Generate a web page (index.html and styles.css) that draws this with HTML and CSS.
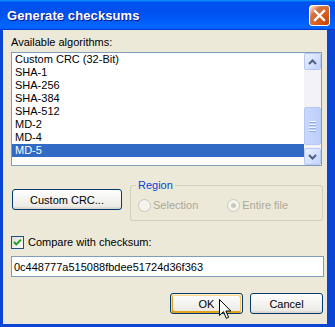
FILE: index.html
```html
<!DOCTYPE html>
<html lang="en">
<head>
    <meta charset="UTF-8">
    <meta name="viewport" content="width=device-width, initial-scale=1.0">
    <title>Generate checksums</title>
    <link rel="stylesheet" href="styles.css">
</head>
<body>
    <div class="window">
        <div class="titlebar">
            <span class="title">Generate checksums</span>
            <button class="close" aria-label="Close">
                <svg width="13" height="13" viewBox="0 0 13 13">
                    <path d="M2 2 L11 11 M11 2 L2 11" stroke="#fff" stroke-width="2.4" stroke-linecap="square"/>
                </svg>
            </button>
        </div>
        <div class="body">
            <div class="label">Available algorithms:</div>
            <div class="listbox">
                <ul class="items">
                    <li>Custom CRC (32-Bit)</li>
                    <li>SHA-1</li>
                    <li>SHA-256</li>
                    <li>SHA-384</li>
                    <li>SHA-512</li>
                    <li>MD-2</li>
                    <li>MD-4</li>
                    <li class="selected">MD-5</li>
                </ul>
                <div class="scrollbar">
                    <div class="sb-btn">
                        <svg width="9" height="6" viewBox="0 0 9 6"><path d="M1 5 L4.5 1.5 L8 5" fill="none" stroke="#4d6185" stroke-width="2"/></svg>
                    </div>
                    <div class="sb-track">
                        <div class="sb-thumb">
                            <span></span><span></span><span></span><span></span>
                        </div>
                    </div>
                    <div class="sb-btn">
                        <svg width="9" height="6" viewBox="0 0 9 6"><path d="M1 1 L4.5 4.5 L8 1" fill="none" stroke="#4d6185" stroke-width="2"/></svg>
                    </div>
                </div>
            </div>

            <div class="options">
                <button class="btn custom">Custom CRC...</button>
                <fieldset class="region">
                    <legend>Region</legend>
                    <div class="radios">
                        <span class="radio-opt"><span class="radio"></span>Selection</span>
                        <span class="radio-opt"><span class="radio checked"></span>Entire file</span>
                    </div>
                </fieldset>
            </div>

            <div class="check">
                <svg width="13" height="13" viewBox="0 0 13 13">
                    <defs>
                        <linearGradient id="cb" x1="0" y1="0" x2="1" y2="1">
                            <stop offset="0" stop-color="#dcdcd7"/>
                            <stop offset="1" stop-color="#ffffff"/>
                        </linearGradient>
                    </defs>
                    <rect x="0.5" y="0.5" width="12" height="12" fill="url(#cb)" stroke="#1c5180"/>
                    <path d="M3 6 L5.3 8.4 L10 3.6" fill="none" stroke="#21a121" stroke-width="2"/>
                </svg>
                <span>Compare with checksum:</span>
            </div>

            <input class="checksum" type="text" value="0c448777a515088fbdee51724d36f363">

            <div class="actions">
                <button class="btn default">OK</button>
                <button class="btn">Cancel</button>
            </div>
        </div>

        <svg class="cursor" width="13" height="21" viewBox="0 0 13 21">
            <path d="M0.5 0.5 L0.5 16.5 L4.5 12.7 L7.3 19.3 L9.6 18.3 L6.9 12 L11.8 12 Z" fill="#fff" stroke="#000" stroke-width="1"/>
        </svg>
    </div>
</body>
</html>
```

FILE: styles.css
```css
body {
    margin: 0;
    padding: 0;
    font-family: "Liberation Sans", Arial, sans-serif;
    font-size: 11px;
    line-height: 13px;
    color: #000;
}
.window {
    position: relative;
    width: 335px;
    height: 327px;
    display: flex;
    flex-direction: column;
    background-color: #0a45d4;
}
.titlebar {
    height: 30px;
    flex-shrink: 0;
    display: flex;
    align-items: center;
    justify-content: space-between;
    padding: 0 5px 0 7px;
    background: linear-gradient(180deg, #0997ff, #0053ee 8%, #0050ee 40%, #0066ff 88%, #0066ff 93%, #005bff 95%, #003dd7 96%, #003dd7);
}
.title {
    color: #fff;
    font-weight: bold;
    font-size: 13px;
    letter-spacing: 0.1px;
    text-shadow: 1px 1px #0f1089;
}
.close {
    width: 21px;
    height: 21px;
    padding: 0;
    margin-top: 1px;
    border: 1px solid #fff;
    border-radius: 3px;
    display: flex;
    align-items: center;
    justify-content: center;
    background: radial-gradient(circle at 90% 90%, #cc4600 0, #dc6527 55%, #cd7546 70%, #ffccb2 90%, #fff 100%);
}
.body {
    flex-grow: 1;
    margin: 0 8px 3px 3px;
    padding: 6px 3px 0 8px;
    background-color: #ece9d8;
    display: flex;
    flex-direction: column;
}
.label {
    height: 13px;
}
.listbox {
    margin-top: 3px;
    width: 311px;
    height: 114px;
    box-sizing: border-box;
    border: 1px solid #7f9db9;
    background-color: #fff;
    display: flex;
}
.items {
    list-style-type: none;
    margin: 0;
    padding: 0;
    flex-grow: 1;
    overflow: hidden;
}
.items li {
    height: 13px;
    padding-left: 3px;
}
.items li.selected {
    background-color: #316ac5;
    color: #fff;
}
.scrollbar {
    width: 17px;
    display: flex;
    flex-direction: column;
    background-color: #f3f2f6;
}
.sb-btn {
    height: 17px;
    box-sizing: border-box;
    border: 1px solid #b6c8f4;
    border-radius: 2px;
    background: linear-gradient(135deg, #eaf0fe, #c2d3fc);
    display: flex;
    align-items: center;
    justify-content: center;
}
.sb-track {
    flex-grow: 1;
    display: flex;
    flex-direction: column;
    justify-content: flex-end;
    padding-bottom: 3px;
}
.sb-thumb {
    height: 38px;
    box-sizing: border-box;
    border: 1px solid #b6c8f4;
    border-radius: 2px;
    background: linear-gradient(90deg, #c9d8fc, #bccefa);
    display: flex;
    flex-direction: column;
    align-items: center;
    justify-content: center;
    gap: 1px;
}
.sb-thumb span {
    width: 7px;
    height: 1px;
    background-color: #eef3fe;
    border-bottom: 1px solid #8fb0f4;
}
.options {
    margin-top: 13px;
    display: flex;
    align-items: flex-start;
}
.btn {
    height: 21px;
    padding: 0;
    border: 1px solid #003c74;
    border-radius: 3px;
    background: linear-gradient(180deg, #fff, #ecebe6 86%, #d6d0c5);
    font-family: inherit;
    font-size: 11px;
    color: #000;
}
.custom {
    width: 110px;
    margin: 10px 0 0 1px;
}
.region {
    width: 193px;
    box-sizing: border-box;
    margin: 0 0 0 8px;
    padding: 0 5px 8px 5px;
    border: 1px solid #d0d0bf;
    border-radius: 3px;
    min-width: 0;
}
.region legend {
    padding: 0 2px;
    color: #0046d5;
    line-height: 13px;
}
.radios {
    margin-top: 7px;
    padding-left: 2px;
    display: flex;
    gap: 29px;
    color: #aca899;
}
.radio-opt {
    display: flex;
    align-items: center;
    gap: 2px;
}
.radio {
    width: 13px;
    height: 13px;
    box-sizing: border-box;
    border: 1px solid #cac8bb;
    border-radius: 50%;
    background-color: #f4f3ee;
    display: flex;
    align-items: center;
    justify-content: center;
}
.radio.checked::after {
    content: "";
    width: 5px;
    height: 5px;
    border-radius: 50%;
    background-color: #cac8bb;
}
.check {
    margin-top: 15px;
    display: flex;
    align-items: center;
    gap: 4px;
    height: 13px;
}
.checksum {
    margin-top: 7px;
    width: 313px;
    height: 21px;
    box-sizing: border-box;
    border: 1px solid #7f9db9;
    padding: 0 2px;
    font-family: inherit;
    font-size: 11px;
    color: #000;
    outline: none;
}
.actions {
    margin: 16px 1px 0 0;
    display: flex;
    justify-content: flex-end;
    gap: 7px;
}
.actions .btn {
    width: 73px;
}
.btn.default {
    box-shadow: inset -1px 1px #fff0cf, inset 1px 2px #fdd889, inset -2px 2px #fbc761, inset 2px -2px #e5a01a;
}
.cursor {
    position: absolute;
    left: 219px;
    top: 299px;
}
```
